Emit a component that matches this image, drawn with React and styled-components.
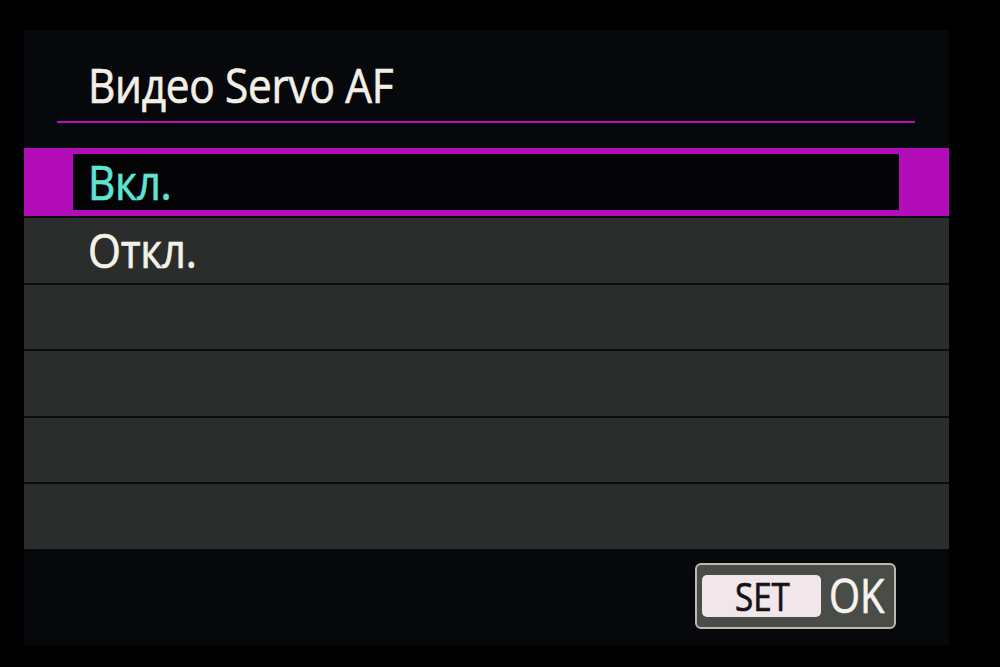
import React from 'react';
import styled, { createGlobalStyle } from 'styled-components';

const GlobalStyle = createGlobalStyle`
  html, body {
    margin: 0;
    padding: 0;
    background: #000;
  }
  body {
    font-family: "Open Sans", "Noto Sans", sans-serif;
  }
`;

const Stage = styled.div`
  width: 1000px;
  height: 667px;
  padding: 30px 51px 22px 24px;
  box-sizing: border-box;
  background: #000;
`;

const Screen = styled.div`
  width: 925px;
  height: 615px;
  background: #06080b;
  display: flex;
  flex-direction: column;
`;

// Canon menus use a narrow, medium-weight face; squeeze and thicken a little
const Label = styled.span`
  display: inline-block;
  transform: scaleX(${p => p.$squeeze || 0.9});
  transform-origin: left center;
  white-space: nowrap;
  -webkit-text-stroke: 0.7px currentColor;
`;

const Header = styled.div`
  padding: 0 34px 0 33px;
  height: 118px;
  box-sizing: border-box;
`;

const Title = styled.h1`
  margin: 0;
  height: 93px;
  box-sizing: border-box;
  padding: 32px 0 0 31px;
  border-bottom: 2px solid #b40fba;
  color: #f2efe6;
  font-size: 47px;
  font-weight: 400;
  line-height: 47px;
  letter-spacing: -0.3px;
`;

const List = styled.div`
  display: flex;
  flex-direction: column;
`;

const SelectedRow = styled.div`
  height: 68px;
  box-sizing: border-box;
  background: #b30db9;
  padding: 6px 50px 6px 49px;
`;

const SelectedInner = styled.div`
  height: 100%;
  background: #040306;
  display: flex;
  align-items: center;
  padding-left: 15px;
  color: #5ee3d4;
  font-size: 47px;
  letter-spacing: -0.3px;
`;

const Row = styled.div`
  height: 66.6px;
  box-sizing: border-box;
  border-top: 2px solid #0b0c0c;
  background: #2a2d2b;
  display: flex;
  align-items: center;
  padding-left: 64px;
  color: #f4f1e8;
  font-size: 47px;
  letter-spacing: -0.3px;
`;

const Footer = styled.div`
  flex: 1;
  display: flex;
  justify-content: flex-end;
  align-items: flex-start;
  padding: 14px 53px 0 0;
`;

const OkButton = styled.div`
  width: 201px;
  height: 66px;
  box-sizing: border-box;
  border: 2px solid #b9bbb2;
  border-radius: 6px;
  background: #4a4c48;
  display: flex;
  align-items: center;
  padding: 0 0 0 5px;
  gap: 8px;
`;

const SetKey = styled.span`
  width: 119px;
  height: 42px;
  border-radius: 5px;
  background: #f1e6ea;
  color: #141214;
  font-size: 39px;
  font-weight: 400;
  display: flex;
  align-items: center;
  justify-content: center;
  padding-left: 12px;
  box-sizing: border-box;
`;

const OkLabel = styled.span`
  color: #f6f3ee;
  font-size: 47px;
  line-height: 1;
`;

export default function App() {
  return (
    <>
      <GlobalStyle />
      <Stage>
        <Screen>
          <Header>
            <Title><Label>Видео Servo AF</Label></Title>
          </Header>
          <List>
            <SelectedRow>
              <SelectedInner><Label>Вкл.</Label></SelectedInner>
            </SelectedRow>
            <Row><Label>Откл.</Label></Row>
            <Row />
            <Row />
            <Row />
            <Row />
          </List>
          <Footer>
            <OkButton>
              <SetKey><Label $squeeze={0.85}>SET</Label></SetKey>
              <OkLabel><Label $squeeze={0.85}>OK</Label></OkLabel>
            </OkButton>
          </Footer>
        </Screen>
      </Stage>
    </>
  );
}
